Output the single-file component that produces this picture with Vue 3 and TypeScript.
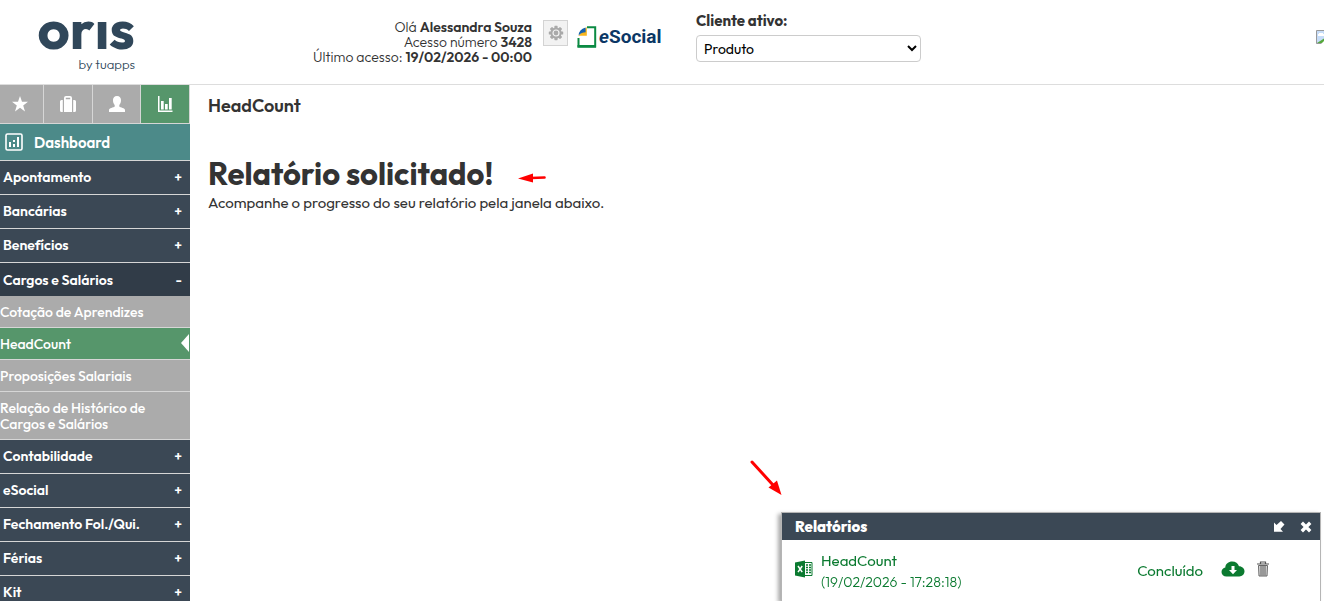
<script setup lang="ts">
import { ref } from 'vue'

interface SubItem {
  label: string
  active?: boolean
}
interface MenuItem {
  label: string
  children?: SubItem[]
}

const client = ref('Produto')
const openMenu = ref('Cargos e Salários')
const menu: MenuItem[] = [
  { label: 'Apontamento' },
  { label: 'Bancárias' },
  { label: 'Benefícios' },
  {
    label: 'Cargos e Salários',
    children: [
      { label: 'Cotação de Aprendizes' },
      { label: 'HeadCount', active: true },
      { label: 'Proposições Salariais' },
      { label: 'Relação de Histórico de Cargos e Salários' },
    ],
  },
  { label: 'Contabilidade' },
  { label: 'eSocial' },
  { label: 'Fechamento Fol./Qui.' },
  { label: 'Férias' },
  { label: 'Kit' },
]

function toggle(label: string): void {
  openMenu.value = openMenu.value === label ? '' : label
}
</script>

<template>
  <div class="page">
    <header class="top">
      <a class="logo" href="#" aria-label="oris by tuapps">
        <span class="logo-name">orıs</span>
        <span class="logo-by">by tuapps</span>
      </a>
      <div class="user">
        <div>Olá <b>Alessandra Souza</b></div>
        <div>Acesso número <b>3428</b></div>
        <div>Último acesso: <b>19/02/2026 - 00:00</b></div>
      </div>
      <button class="gear" type="button" aria-label="Configurações">
        <svg width="16" height="16" viewBox="0 0 16 16">
          <g fill="#a9a9a9">
            <circle cx="8" cy="8" r="5.6" />
            <rect v-for="n in 8" :key="n" x="6.4" y="0.8" width="3.2" height="4" rx="0.6" :transform="`rotate(${n * 45} 8 8)`" />
          </g>
          <circle cx="8" cy="8" r="3" fill="none" stroke="#f2f2f2" stroke-width="1.2" />
        </svg>
      </button>
      <a class="esocial" href="#" aria-label="eSocial">
        <svg width="20" height="22" viewBox="0 0 20 22">
          <path d="M10 1.2H18.2V20.5H1.5V12" fill="none" stroke="#0b8a43" stroke-width="2" />
          <path d="M0.5 20.3H19" stroke="#0b8a43" stroke-width="2.6" />
          <path d="M9.8 1V9.8H1.5Z" fill="#f7b51c" />
          <path d="M8.6 1.4V6.2Q4.5 6.2 1.6 9.4Q1.8 3.4 8.6 1.4Z" fill="#1460ae" />
        </svg>
        <span><i>e</i>Social</span>
      </a>
      <div class="client">
        <label for="client">Cliente ativo:</label>
        <select id="client" v-model="client">
          <option>Produto</option>
        </select>
      </div>
      <svg class="missing" width="16" height="16" viewBox="0 0 16 16" aria-hidden="true">
        <path d="M0.5 13.5V0.5H15.5V13.5Z" fill="#c6dcf8" stroke="#999" />
        <path d="M2 6V4H3V3H7V4H8V6Z" fill="#fff" />
        <path d="M1 13L8 8.5V13Z" fill="#56a83c" />
        <path d="M5 14L8 11V14Z" fill="#fff" />
      </svg>
    </header>

    <div class="body">
      <aside class="side">
        <nav class="tabs" aria-label="Atalhos">
          <button type="button" aria-label="Favoritos">
            <svg width="18" height="18" viewBox="0 0 18 18"><path fill="#fff" d="M9 1L11 6.8H17L12.2 10.4L14 16.5L9 12.8L4 16.5L5.8 10.4L1 6.8H7Z" /></svg>
          </button>
          <button type="button" aria-label="Empresa">
            <svg width="18" height="18" viewBox="0 0 18 18">
              <g fill="#fff">
                <path d="M5 17V3Q5 1 7 1H11Q13 1 13 3V17ZM6.8 4.2H11.2V2.8H6.8Z" fill-rule="evenodd" />
                <path d="M3.8 5V17H2.5Q1 17 1 15.5V6.5Q1 5 2.5 5ZM14.2 5V17H15.5Q17 17 17 15.5V6.5Q17 5 15.5 5Z" />
              </g>
            </svg>
          </button>
          <button type="button" aria-label="Colaborador">
            <svg width="18" height="18" viewBox="0 0 18 18"><path fill="#fff" d="M9 1C11.7 1 13 2.8 13 5C13 7.5 12.3 8.7 11.3 10V11.5C12.5 12.6 17 13 17 15V17H1V15C1 13 5.5 12.6 6.7 11.5V10C5.7 8.7 5 7.5 5 5C5 2.8 6.3 1 9 1Z" /></svg>
          </button>
          <button type="button" class="on" aria-label="Relatórios">
            <svg width="16" height="18" viewBox="0 0 16 18"><path fill="#fff" d="M1 1H2.5V15.5H15.5V17H1ZM4 6H6.7V14.5H4ZM8 9H10.7V14.5H8ZM12 3H14.7V14.5H12Z" /></svg>
          </button>
        </nav>
        <a class="dash" href="#">
          <svg width="18" height="18" viewBox="0 0 18 18">
            <rect x="1" y="1" width="16" height="16" rx="1.5" fill="none" stroke="#fff" stroke-width="1.6" />
            <path fill="#fff" d="M4 9H6V14H4ZM8 7H10V9H8ZM8 11H10V14H8ZM12 4H14V14H12Z" />
          </svg>
          Dashboard
        </a>
        <ul class="menu">
          <li v-for="item in menu" :key="item.label">
            <button class="row" :class="{ open: openMenu === item.label }" type="button" @click="toggle(item.label)">
              <span>{{ item.label }}</span>
              <span>{{ openMenu === item.label ? '-' : '+' }}</span>
            </button>
            <ul v-if="item.children && openMenu === item.label" class="sub">
              <li v-for="s in item.children" :key="s.label">
                <a href="#" :class="{ active: s.active }">{{ s.label }}</a>
              </li>
            </ul>
          </li>
        </ul>
      </aside>

      <main class="content">
        <h2>HeadCount</h2>
        <div class="title">
          <h1>Relatório solicitado!</h1>
          <svg width="28" height="10" viewBox="0 0 28 10" aria-hidden="true">
            <path d="M0 5.5L15 0.5V9.5Z" fill="#f00" />
            <path d="M13 5L26.5 4.5" stroke="#f00" stroke-width="2.6" stroke-linecap="round" />
          </svg>
        </div>
        <p>Acompanhe o progresso do seu relatório pela janela abaixo.</p>
      </main>
    </div>

    <section class="popup" aria-label="Relatórios">
      <svg class="pointer" width="32" height="36" viewBox="0 0 32 36" aria-hidden="true">
        <path d="M2 2L23 25" stroke="#f00" stroke-width="3" stroke-linecap="round" />
        <path d="M31.5 35L18.5 27.5L27 20.5Z" fill="#f00" />
      </svg>
      <div class="popup-head">
        <h3>Relatórios</h3>
        <button type="button" aria-label="Minimizar">
          <svg width="12" height="12" viewBox="0 0 12 12"><path fill="#fff" d="M1 1.5L3.5 4L8 0L11.5 3.5L7.5 8L10 10.8H1Z" /></svg>
        </button>
        <button type="button" aria-label="Fechar">
          <svg width="12" height="12" viewBox="0 0 12 12"><path d="M1.8 1.8L10.2 10.2M10.2 1.8L1.8 10.2" stroke="#fff" stroke-width="3.4" /></svg>
        </button>
      </div>
      <div class="report">
        <svg width="18" height="18" viewBox="0 0 18 18" aria-hidden="true">
          <path d="M10 2.5H17V15.5H10" fill="#fff" stroke="#0b7a30" />
          <path d="M11 5H13M14 5H16M11 7.5H13M14 7.5H16M11 10H13M14 10H16M11 12.5H13M14 12.5H16" stroke="#0b7a30" stroke-width="1.6" />
          <path d="M0 2.5L10 0.5V17.5L0 15.5Z" fill="#0b7a30" />
          <path d="M3 6L7.2 12.2M7.2 6L3 12.2" stroke="#fff" stroke-width="1.5" />
        </svg>
        <div class="report-name">
          <a href="#">HeadCount</a>
          <small>(19/02/2026 - 17:28:18)</small>
        </div>
        <span class="status">Concluído</span>
        <button type="button" aria-label="Baixar">
          <svg width="24" height="16" viewBox="0 0 24 16">
            <path fill="#0b7a30" d="M5.5 15.5C2.5 15.5 0.5 13.5 0.5 11C0.5 8.5 2.3 6.9 4.3 6.5C4.3 3 7.5 0.5 11.2 0.5C14.6 0.5 17 2.4 18 5.2C21.2 5.2 23.5 7.5 23.5 10.3C23.5 13.3 21.2 15.5 18.3 15.5Z" />
            <path fill="#fff" d="M10.5 5H13.5V9H16L12 13.2L8 9H10.5Z" />
          </svg>
        </button>
        <button type="button" aria-label="Excluir">
          <svg width="12" height="16" viewBox="0 0 12 16">
            <path d="M3.5 2.5V1H8.5V2.5M0 3H12" fill="none" stroke="#555" stroke-width="1.2" />
            <path d="M1.5 4.5H10.5L10 15H2Z" fill="#ddd" stroke="#666" />
            <path d="M4 5V14.5M6 5V14.5M8 5V14.5" stroke="#555" />
          </svg>
        </button>
      </div>
    </section>
  </div>
</template>

<style>
body {
  overflow: hidden;
}
</style>

<style scoped>
.page {
  height: 100vh;
  overflow: hidden;
  background: #fff;
  color: #333;
  font-family: Outfit, Lato, sans-serif;
  font-size: 15px;
  font-weight: 400;
}
h1, h2, h3, p, ul {
  margin: 0;
  padding: 0;
}
h2, b {
  font-weight: 600;
}
ul {
  list-style: none;
}
a {
  text-decoration: none;
}
button {
  font: inherit;
  padding: 0;
  border: 0;
  background: none;
  cursor: pointer;
}
svg {
  display: block;
  flex: none;
}
.top {
  display: flex;
  align-items: flex-start;
  height: 84px;
  border-bottom: 1px solid #ddd;
}
.logo {
  display: flex;
  flex-direction: column;
  align-items: flex-end;
  width: 135px;
  margin-right: 55px;
  color: #30475a;
}
.logo-name {
  font-size: 56px;
  font-weight: 700;
  line-height: 57px;
}
.logo-by {
  font-size: 13px;
  font-weight: 300;
  line-height: 14px;
}
.user {
  width: 342px;
  padding-top: 20px;
  font-size: 14px;
  font-weight: 300;
  line-height: 15px;
  text-align: right;
}
.gear {
  display: flex;
  align-items: center;
  justify-content: center;
  width: 25px;
  height: 26px;
  margin: 20px 9px 0 11px;
  border: 1px solid #d3d3d3;
  background: #f2f2f2;
}
.esocial {
  display: flex;
  align-items: center;
  gap: 2px;
  width: 119px;
  padding-top: 24px;
  color: #0b3765;
  font: bold 19px/26px Roboto, sans-serif;
}
.client {
  display: flex;
  flex-direction: column;
  gap: 4px;
  width: 225px;
  padding-top: 11px;
}
.client label {
  font-size: 15px;
  font-weight: 700;
  line-height: 20px;
}
.client select {
  height: 27px;
  padding: 0 3px;
  border: 1px solid #ccc;
  border-radius: 4px;
  background: #fff;
  color: #000;
  font: 14px Outfit, Lato, sans-serif;
}
.missing {
  margin: 30px -8px 0 auto;
}
.body {
  display: flex;
}
.side {
  flex: none;
  width: 190px;
}
.tabs {
  display: grid;
  grid-template-columns: 44px 49px 48px 49px;
}
.tabs button {
  display: flex;
  align-items: center;
  justify-content: center;
  height: 39px;
  border-right: 1px solid #d6d6d6;
  border-bottom: 1px solid #d6d6d6;
  background: #ababab;
}
.tabs button:first-child {
  padding-right: 4px;
}
.tabs .on {
  background: #56966b;
}
.dash {
  display: flex;
  align-items: center;
  gap: 11px;
  height: 36px;
  padding-left: 5px;
  border-bottom: 1px solid #d6d6d6;
  background: #4c8a89;
  color: #fff;
  font-weight: 600;
}
.row {
  display: flex;
  align-items: center;
  justify-content: space-between;
  width: 100%;
  height: 34px;
  padding: 0 8px 2px 3px;
  border-bottom: 1px solid #d6d6d6;
  background: #3b4855;
  color: #fff;
  font-size: 14px;
  font-weight: 600;
}
.row.open {
  height: 33px;
  padding-bottom: 0;
  border-bottom: 0;
  background: #313c48;
}
.sub a {
  display: block;
  position: relative;
  padding: 8px 30px 7px 0;
  border-bottom: 1px solid #d6d6d6;
  background: #ababab;
  color: #fff;
  font-size: 14px;
  font-weight: 500;
  line-height: 16px;
}
.sub .active {
  background: #56966b;
}
.sub .active::after {
  content: "";
  position: absolute;
  right: 1px;
  top: 6px;
  border: solid transparent;
  border-width: 9px 8px 9px 0;
  border-right-color: #fff;
}
.content {
  flex: 1;
  padding: 10px 18px;
}
h2 {
  font-size: 18px;
  line-height: 22px;
}
.title {
  display: flex;
  align-items: center;
  gap: 25px;
  margin-top: 38px;
}
.title svg {
  margin-top: 8px;
}
h1 {
  font-size: 31px;
  font-weight: 700;
  line-height: 38px;
}
.content p {
  line-height: 20px;
}
.popup {
  position: fixed;
  right: 3px;
  bottom: 0;
  width: 540px;
  height: 89px;
  box-sizing: border-box;
  border: solid #b5b5b5;
  border-width: 1px 1px 0;
  background: #fff;
  box-shadow: -3px 2px 4px #aaa;
}
.pointer {
  position: absolute;
  left: -32px;
  top: -53px;
}
.popup-head {
  display: flex;
  align-items: center;
  gap: 15px;
  height: 27px;
  padding: 0 8px 0 13px;
  background: #3b4855;
  color: #fff;
}
h3 {
  flex: 1;
  font-size: 15px;
  line-height: 24px;
  font-weight: 800;
}
.report {
  display: flex;
  align-items: center;
  height: 58px;
  padding: 0 51px 0 13px;
  color: #0b7a30;
}
.report-name {
  display: flex;
  flex: 1;
  flex-direction: column;
  padding: 4px 0 0 8px;
}
.report-name a {
  color: inherit;
  line-height: 22px;
}
.report-name small {
  font-size: 14px;
  font-weight: 300;
  line-height: 20px;
}
.status {
  padding: 3px 18px 0 0;
}
.report button + button {
  margin-left: 12px;
}
</style>
